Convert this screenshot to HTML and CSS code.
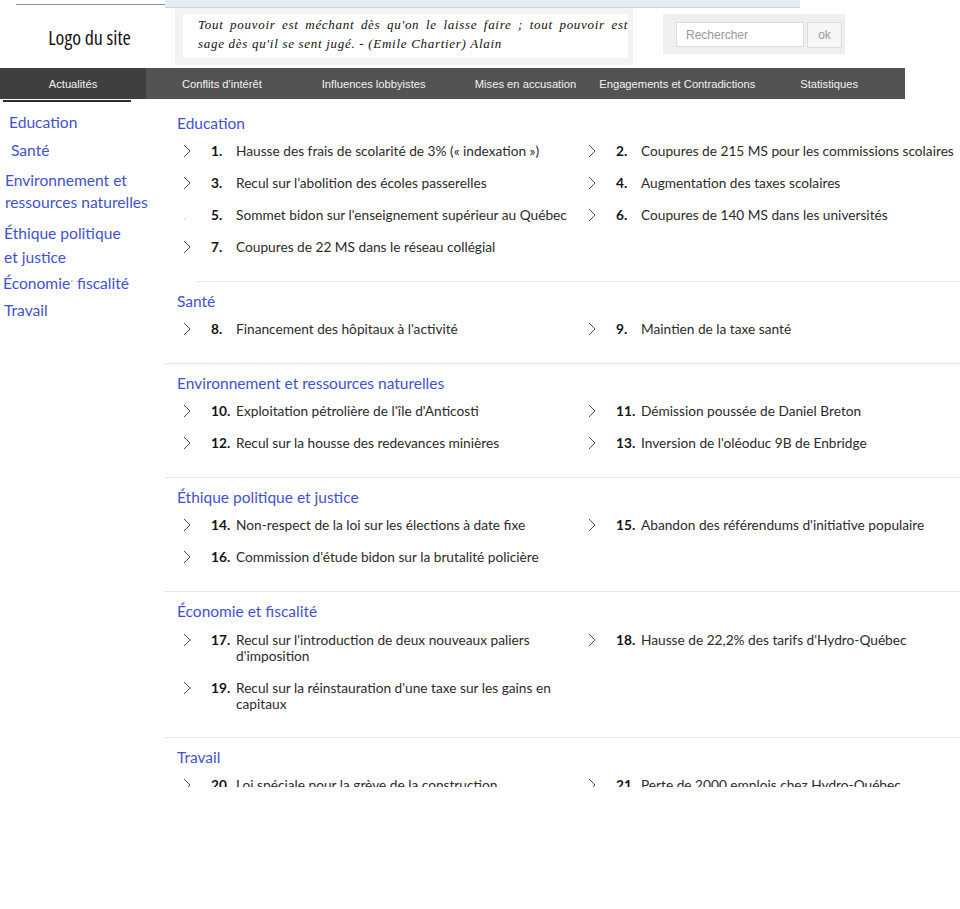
FILE: index.html
```html
<!DOCTYPE html>
<html lang="fr">
<head>
<meta charset="utf-8">
<title>Actualités</title>
<link rel="stylesheet" href="styles.css">
</head>
<body>
<div class="page">
  <header class="top">
    <div class="strip">
      <div class="strip-left"><span class="strip-line"></span></div>
      <div class="strip-band"></div>
    </div>
    <div class="head-row">
      <div class="logo">Logo du site</div>
      <div class="quote-panel">
        <p class="quote"><span class="quote-line quote-line--full">Tout pouvoir est méchant dès qu'on le laisse faire ; tout pouvoir est</span><span class="quote-line">sage dès qu'il se sent jugé. - (Emile Chartier) Alain</span></p>
      </div>
      <form class="search">
        <input class="search-input" type="text" placeholder="Rechercher">
        <button class="search-btn" type="button">ok</button>
      </form>
    </div>
  </header>

  <nav class="nav">
    <a class="nav-link nav-link--active" href="#">Actualités</a>
    <a class="nav-link" href="#">Conflits d'intérêt</a>
    <a class="nav-link" href="#">Influences lobbyistes</a>
    <a class="nav-link" href="#">Mises en accusation</a>
    <a class="nav-link" href="#">Engagements et Contradictions</a>
    <a class="nav-link" href="#">Statistiques</a>
  </nav>
  <div class="nav-under"><span class="nav-under-line"></span></div>

  <div class="content">
    <aside class="side">
      <a class="side-link side-edu" href="#">Education</a>
      <a class="side-link side-sante" href="#">Santé</a>
      <a class="side-link side-env" href="#">Environnement et<br>ressources naturelles</a>
      <a class="side-link side-eth" href="#">Éthique politique<br>et justice</a>
      <a class="side-link side-eco" href="#">Économie<span class="dot">·</span> fiscalité</a>
      <a class="side-link side-trav" href="#">Travail</a>
    </aside>

    <main class="main">
      <section class="sec">
        <h2 class="sec-title">Education</h2>
        <ul class="items">
          <li class="item"><svg class="chev" viewBox="0 0 8 14"><polyline points="1,1 7,7 1,13"/></svg><b class="num">1.</b><span class="txt">Hausse des frais de scolarité de 3% (« indexation »)</span></li>
          <li class="item"><svg class="chev" viewBox="0 0 8 14"><polyline points="1,1 7,7 1,13"/></svg><b class="num">2.</b><span class="txt">Coupures de 215 MS pour les commissions scolaires</span></li>
          <li class="item"><svg class="chev" viewBox="0 0 8 14"><polyline points="1,1 7,7 1,13"/></svg><b class="num">3.</b><span class="txt">Recul sur l’abolition des écoles passerelles</span></li>
          <li class="item"><svg class="chev" viewBox="0 0 8 14"><polyline points="1,1 7,7 1,13"/></svg><b class="num">4.</b><span class="txt">Augmentation des taxes scolaires</span></li>
          <li class="item"><svg class="chev chev--faint" viewBox="0 0 8 14"><circle cx="2" cy="11" r="0.8"/></svg><b class="num">5.</b><span class="txt">Sommet bidon sur l'enseignement supérieur au Québec</span></li>
          <li class="item"><svg class="chev" viewBox="0 0 8 14"><polyline points="1,1 7,7 1,13"/></svg><b class="num">6.</b><span class="txt">Coupures de 140 MS dans les universités</span></li>
          <li class="item"><svg class="chev" viewBox="0 0 8 14"><polyline points="1,1 7,7 1,13"/></svg><b class="num">7.</b><span class="txt">Coupures de 22 MS dans le réseau collégial</span></li>
        </ul>
      </section>
      <div class="rule rule--inset"></div>

      <section class="sec">
        <h2 class="sec-title">Santé</h2>
        <ul class="items">
          <li class="item"><svg class="chev" viewBox="0 0 8 14"><polyline points="1,1 7,7 1,13"/></svg><b class="num">8.</b><span class="txt">Financement des hôpitaux à l'activité</span></li>
          <li class="item"><svg class="chev" viewBox="0 0 8 14"><polyline points="1,1 7,7 1,13"/></svg><b class="num">9.</b><span class="txt">Maintien de la taxe santé</span></li>
        </ul>
      </section>
      <div class="rule"></div>

      <section class="sec">
        <h2 class="sec-title">Environnement et ressources naturelles</h2>
        <ul class="items">
          <li class="item"><svg class="chev" viewBox="0 0 8 14"><polyline points="1,1 7,7 1,13"/></svg><b class="num">10.</b><span class="txt">Exploitation pétrolière de l'île d'Anticosti</span></li>
          <li class="item"><svg class="chev" viewBox="0 0 8 14"><polyline points="1,1 7,7 1,13"/></svg><b class="num">11.</b><span class="txt">Démission poussée de Daniel Breton</span></li>
          <li class="item"><svg class="chev" viewBox="0 0 8 14"><polyline points="1,1 7,7 1,13"/></svg><b class="num">12.</b><span class="txt">Recul sur la housse des redevances minières</span></li>
          <li class="item"><svg class="chev" viewBox="0 0 8 14"><polyline points="1,1 7,7 1,13"/></svg><b class="num">13.</b><span class="txt">Inversion de l'oléoduc 9B de Enbridge</span></li>
        </ul>
      </section>
      <div class="rule"></div>

      <section class="sec">
        <h2 class="sec-title">Éthique politique et justice</h2>
        <ul class="items">
          <li class="item"><svg class="chev" viewBox="0 0 8 14"><polyline points="1,1 7,7 1,13"/></svg><b class="num">14.</b><span class="txt">Non-respect de la loi sur les élections à date fixe</span></li>
          <li class="item"><svg class="chev" viewBox="0 0 8 14"><polyline points="1,1 7,7 1,13"/></svg><b class="num">15.</b><span class="txt">Abandon des référendums d'initiative populaire</span></li>
          <li class="item"><svg class="chev" viewBox="0 0 8 14"><polyline points="1,1 7,7 1,13"/></svg><b class="num">16.</b><span class="txt">Commission d'étude bidon sur la brutalité policière</span></li>
        </ul>
      </section>
      <div class="rule"></div>

      <section class="sec">
        <h2 class="sec-title">Économie et fiscalité</h2>
        <ul class="items items--two">
          <li class="item"><svg class="chev" viewBox="0 0 8 14"><polyline points="1,1 7,7 1,13"/></svg><b class="num">17.</b><span class="txt">Recul sur l'introduction de deux nouveaux paliers<br>d'imposition</span></li>
          <li class="item"><svg class="chev" viewBox="0 0 8 14"><polyline points="1,1 7,7 1,13"/></svg><b class="num">18.</b><span class="txt">Hausse de 22,2% des tarifs d'Hydro-Québec</span></li>
          <li class="item"><svg class="chev" viewBox="0 0 8 14"><polyline points="1,1 7,7 1,13"/></svg><b class="num">19.</b><span class="txt">Recul sur la réinstauration d'une taxe sur les gains en<br>capitaux</span></li>
        </ul>
      </section>
      <div class="rule"></div>

      <section class="sec">
        <h2 class="sec-title">Travail</h2>
        <ul class="items">
          <li class="item"><svg class="chev" viewBox="0 0 8 14"><polyline points="1,1 7,7 1,13"/></svg><b class="num">20.</b><span class="txt">Loi spéciale pour la grève de la construction</span></li>
          <li class="item"><svg class="chev" viewBox="0 0 8 14"><polyline points="1,1 7,7 1,13"/></svg><b class="num">21.</b><span class="txt">Perte de 2000 emplois chez Hydro-Québec</span></li>
        </ul>
      </section>
    </main>
  </div>
</div>
</body>
</html>
```

FILE: styles.css
```css
html, body {
  margin: 0;
  padding: 0;
  background: #ffffff;
}

.page {
  width: 960px;
  height: 787px;
  overflow: hidden;
  background: #ffffff;
}

/* ---------- top strip ---------- */
.strip {
  display: flex;
  height: 8px;
}

.strip-left {
  width: 165px;
  flex: none;
  padding: 4px 0 0 16px;
  box-sizing: border-box;
}

.strip-line {
  display: block;
  width: 156px;
  height: 1px;
  background: #8295aa;
}

.strip-band {
  width: 635px;
  flex: none;
  background: #e4ecf4;
  border-bottom: 1px solid #c6d5e5;
  box-sizing: border-box;
}

/* ---------- header row ---------- */
.head-row {
  display: flex;
  height: 60px;
}

.logo {
  width: 175px;
  flex: none;
  display: flex;
  align-items: center;
  justify-content: center;
  padding: 0 0 2px 4px;
  box-sizing: border-box;
  font-family: "Open Sans", "Noto Sans", sans-serif;
  font-stretch: 75%;
  font-size: 20px;
  color: #151515;
}

.quote-panel {
  width: 458px;
  height: 57px;
  flex: none;
  background: #f3f3f3;
  padding: 6px 5px 0 8px;
  box-sizing: border-box;
}

.quote {
  margin: 0;
  height: 44px;
  background: #ffffff;
  padding: 1px 0 0 15px;
  box-sizing: border-box;
  font-family: "Liberation Serif", "DejaVu Serif", serif;
  font-style: italic;
  font-size: 13px;
  line-height: 19px;
  letter-spacing: 0.7px;
  color: #111111;
}

.quote-line {
  display: block;
  white-space: nowrap;
}

.quote-line--full {
  white-space: normal;
  text-align: justify;
  text-align-last: justify;
}

.search {
  margin: 6px 0 0 30px;
  width: 182px;
  height: 40px;
  flex: none;
  background: #efefef;
  display: flex;
  align-items: flex-start;
  gap: 3px;
  padding: 8px 0 0 13px;
  box-sizing: border-box;
}

.search-input {
  width: 128px;
  height: 25px;
  box-sizing: border-box;
  border: 1px solid #dddddd;
  background: #ffffff;
  padding: 0 0 0 9px;
  margin: 0;
  font-family: "Liberation Sans", Arial, sans-serif;
  font-size: 12px;
  color: #999999;
  outline: none;
}

.search-input::placeholder {
  color: #9a9a9a;
}

.search-btn {
  width: 35px;
  height: 26px;
  box-sizing: border-box;
  border: 1px solid #dddddd;
  background: #f6f6f6;
  margin: 0;
  padding: 0;
  font-family: "Liberation Sans", Arial, sans-serif;
  font-size: 12px;
  color: #9a9a9a;
}

/* ---------- nav ---------- */
.nav {
  display: grid;
  grid-template-columns: 146px repeat(5, minmax(0, 1fr));
  width: 905px;
  height: 31px;
  background: #535353;
}

.nav-link {
  display: flex;
  align-items: center;
  justify-content: center;
  white-space: nowrap;
  text-decoration: none;
  font-family: "Liberation Sans", Arial, sans-serif;
  font-size: 11.2px;
  color: #f2f2f2;
}

.nav-link--active {
  background: #3f3f3f;
}

.nav-under {
  height: 4px;
}

.nav-under-line {
  display: block;
  margin: 1px 0 0 3px;
  width: 128px;
  height: 2px;
  background: #2e2e2e;
}

/* ---------- content ---------- */
.content {
  display: flex;
  align-items: flex-start;
}

.side {
  width: 170px;
  flex: none;
  display: flex;
  flex-direction: column;
  align-items: flex-start;
  padding-top: 7px;
  font-family: "Lato", "Liberation Sans", sans-serif;
  font-size: 15.6px;
  line-height: 22px;
}

.side-link {
  color: #3f52d3;
  text-decoration: none;
  white-space: nowrap;
}

.side-edu { padding-left: 9px; }
.side-sante { padding-left: 11px; margin-top: 6px; }
.side-env { padding-left: 5px; margin-top: 8px; }
.side-eth { padding-left: 4px; margin-top: 8px; line-height: 24px; }
.side-eco { padding-left: 3px; margin-top: 1px; }
.side-trav { padding-left: 4px; margin-top: 5px; }

.dot {
  color: #9aa3d8;
  font-size: 11px;
  vertical-align: 4px;
}

.main {
  margin-left: 7px;
  width: 783px;
  flex: none;
  padding-top: 9px;
  font-family: "Lato", "Liberation Sans", sans-serif;
}

.sec-title {
  margin: 0 0 2px;
  font-weight: 400;
  font-size: 15.5px;
  line-height: 20px;
  color: #3f52d3;
}

.items {
  list-style: none;
  margin: 0;
  padding: 0 0 18px;
  display: grid;
  grid-template-columns: 405px 1fr;
}

.items--two {
  padding-top: 1px;
  padding-bottom: 17px;
}

.item {
  display: flex;
  align-items: flex-start;
  padding: 8px 0 8px 6px;
  font-size: 13.7px;
  line-height: 16px;
  color: #2b2b2b;
  white-space: nowrap;
}

.chev {
  width: 8px;
  height: 14px;
  flex: none;
  margin: 1px 20px 0 0;
  fill: none;
  stroke: #4a4a4a;
  stroke-width: 1;
}

.chev--faint {
  stroke: none;
  fill: #c8c8c8;
}

.num {
  width: 25px;
  flex: none;
  font-weight: 700;
  color: #151515;
}

.txt {
  flex: none;
}

.rule {
  height: 1px;
  background: #e6e6e6;
  margin: 0 0 9px -12px;
}

.rule--inset {
  margin-left: 20px;
}
```
